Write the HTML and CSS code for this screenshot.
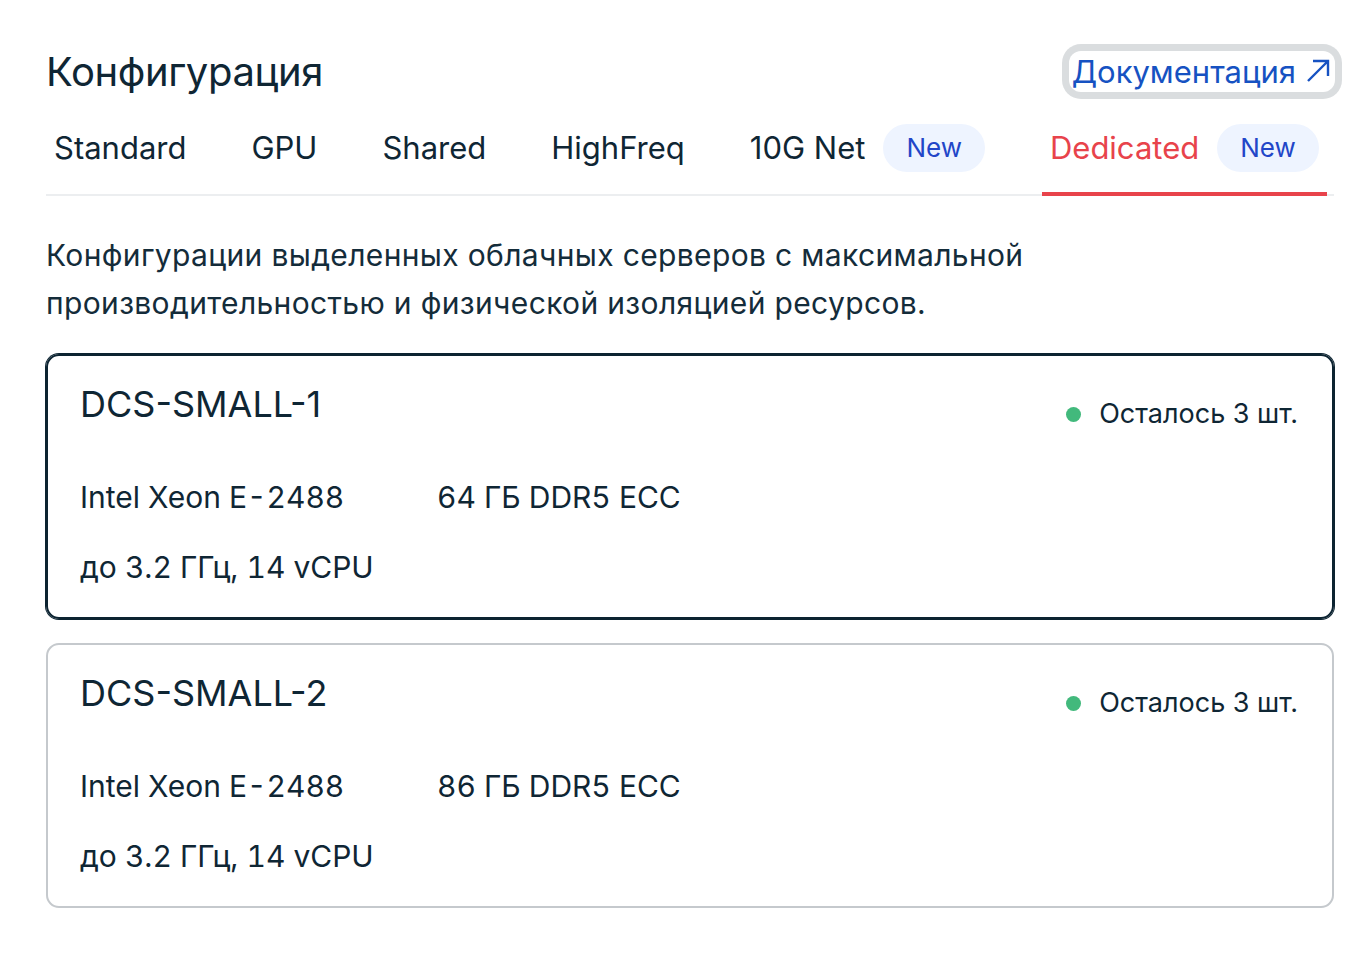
FILE: index.html
```html
<!DOCTYPE html>
<html lang="ru">
<head>
  <meta charset="UTF-8">
  <meta name="viewport" content="width=device-width, initial-scale=1.0">
  <title>Конфигурация</title>
  <link rel="stylesheet" href="styles.css">
</head>
<body>
  <div class="config">
    <div class="config-head">
      <h1>Конфигурация</h1>
      <a class="doc-link" href="#">Документация
        <svg class="doc-arrow" viewBox="0 0 24 24" width="24" height="24"><path d="M2 22 L22 2 M7 2 H22 V17" fill="none" stroke="currentColor" stroke-width="2.4"/></svg>
      </a>
    </div>
    <div class="tabs">
      <a class="tab" href="#">Standard</a>
      <a class="tab" href="#">GPU</a>
      <a class="tab" href="#">Shared</a>
      <a class="tab" href="#">HighFreq</a>
      <a class="tab" href="#">10G Net <span class="badge">New</span></a>
      <a class="tab active" href="#">Dedicated <span class="badge">New</span></a>
    </div>
    <p class="description">Конфигурации выделенных облачных серверов с максимальной производительностью и физической изоляцией ресурсов.</p>
    <div class="server-list">
      <div class="server selected">
        <div class="server-head">
          <span class="server-name">DCS-SMALL-1</span>
          <span class="stock"><span class="stock-dot"></span>Осталось 3 шт.</span>
        </div>
        <div class="specs">
          <span>Intel Xeon E-2488</span>
          <span>64 ГБ DDR5 ECC</span>
          <span>до 3.2 ГГц, 14 vCPU</span>
        </div>
      </div>
      <div class="server">
        <div class="server-head">
          <span class="server-name">DCS-SMALL-2</span>
          <span class="stock"><span class="stock-dot"></span>Осталось 3 шт.</span>
        </div>
        <div class="specs">
          <span>Intel Xeon E-2488</span>
          <span>86 ГБ DDR5 ECC</span>
          <span>до 3.2 ГГц, 14 vCPU</span>
        </div>
      </div>
    </div>
  </div>
</body>
</html>
```

FILE: styles.css
```css
body { margin: 0; background: #fff; color: #0f2634; font-family: Inter, "Noto Sans", sans-serif; }
.config { padding: 44px 24px 0 46px; }
.config-head { display: flex; justify-content: space-between; align-items: center; height: 54px; }
.config-head h1 { margin: 0; font-size: 40px; font-weight: 400; letter-spacing: -0.4px; }
.doc-link { display: inline-flex; align-items: center; gap: 10px; height: 41px; padding: 0 5px 0 3px; margin-right: -1px; border-radius: 12px; box-shadow: 0 0 0 7px #dadddf; color: #1652c2; text-decoration: none; font-size: 31px; white-space: nowrap; }
.doc-arrow { display: block; }
.tabs { display: flex; gap: 49px; margin-top: 26px; border-bottom: 2px solid #eceef0; }
.tab { display: flex; flex-shrink: 0; align-items: center; gap: 18px; height: 48px; padding: 0 8px 22px; margin-bottom: -2px; border-bottom: 2px solid transparent; color: #0f2634; text-decoration: none; font-size: 31px; line-height: 44px; white-space: nowrap; }
.tab.active { color: #e8434b; padding-bottom: 20px; border-bottom: 4px solid #e8434b; }
.badge { display: inline-flex; align-items: center; height: 48px; padding: 0 23px; border-radius: 24px; background: #eef4ff; color: #2246c8; font-size: 26px; }
.description { margin: 35px 0 27px; font-size: 30px; line-height: 48px; letter-spacing: 0.35px; max-width: 1010px; color: #142c3a; }
.server-list { display: flex; flex-direction: column; gap: 24px; }
.server { border: 2px solid #c5c9cd; border-radius: 13px; padding: 26px 32px 30px; }
.server.selected { border-color: #0c2331; box-shadow: 0 0 0 1px #0c2331; }
.server-head { display: flex; justify-content: space-between; align-items: flex-start; }
.server-name { font-size: 36px; line-height: 44px; }
.stock { display: flex; align-items: center; gap: 18px; margin-top: 10px; margin-right: 2px; font-size: 27px; line-height: 44px; }
.stock-dot { width: 15px; height: 15px; border-radius: 50%; background: #42b97c; }
.specs { display: grid; grid-template-columns: 357px auto; row-gap: 30px; margin-top: 41px; font-size: 30px; line-height: 40px; font-feature-settings: "tnum"; }
```
